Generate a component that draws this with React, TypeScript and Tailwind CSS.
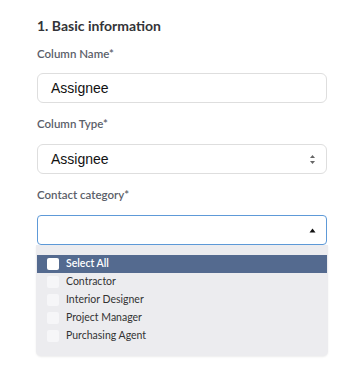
import React from 'react';

const options = ['Contractor', 'Interior Designer', 'Project Manager', 'Purchasing Agent'];

const Label: React.FC<{ text: string; className?: string }> = ({ text, className }) => (
  <div className={`text-[11.5px] leading-[16px] font-semibold text-[#5b6069] ${className ?? ''}`}>{text}</div>
);

const App: React.FC = () => {
  return (
    <div className="w-[360px] h-[370px] bg-white px-[37px] pt-[16px] font-['Lato','Open_Sans',sans-serif]">
      <h2 className="text-[14px] leading-[20px] font-bold text-[#333438]">1. Basic information</h2>

      <Label text="Column Name*" className="mt-[10px]" />
      <div className="mt-[11px] h-[30px] w-[290px] rounded-[6px] border border-[#dedede] bg-white flex items-center px-[13px]">
        <span className="font-['Liberation_Sans',Arial,sans-serif] text-[14px] text-[#111]">Assignee</span>
      </div>

      <Label text="Column Type*" className="mt-[13px]" />
      <div className="mt-[12px] h-[30px] w-[290px] rounded-[6px] border border-[#dedede] bg-white flex items-center justify-between pl-[13px] pr-[10px]">
        <span className="font-['Liberation_Sans',Arial,sans-serif] text-[14px] text-[#111]">Assignee</span>
        <svg width="7" height="11" viewBox="0 0 7 11">
          <path d="M3.5 1 L6 4 L1 4 Z" fill="#666" />
          <path d="M1 7 L6 7 L3.5 10 Z" fill="#666" />
        </svg>
      </div>

      <Label text="Contact category*" className="mt-[13px]" />
      <div className="mt-[12px] h-[30px] w-[290px] rounded-[4px] border border-[#5e9ad8] bg-white flex items-center justify-end pr-[10px]">
        <svg width="7" height="5" viewBox="0 0 7 5">
          <path d="M3.5 0.5 L6.5 4.5 L0.5 4.5 Z" fill="#111" />
        </svg>
      </div>

      <div className="-ml-[1px] w-[292px] rounded-b-[5px] bg-[#ececef] pt-[10px] pb-[11px] shadow-[0_1px_2px_rgba(0,0,0,0.08)]">
        <div className="mx-[1px] h-[18px] bg-[#546a8f] flex items-center pl-[10px]">
          <span className="w-[12px] h-[12px] rounded-[2px] bg-white" />
          <span className="ml-[7px] text-[10.5px] font-semibold text-white">Select All</span>
        </div>
        {options.map((o) => (
          <div key={o} className="mx-[1px] h-[18px] flex items-center pl-[10px]">
            <span className="w-[12px] h-[12px] rounded-[2px] bg-[#f6f6f8]" />
            <span className="ml-[7px] text-[10.5px] text-[#333]">{o}</span>
          </div>
        ))}
      </div>
    </div>
  );
};

export default App;
